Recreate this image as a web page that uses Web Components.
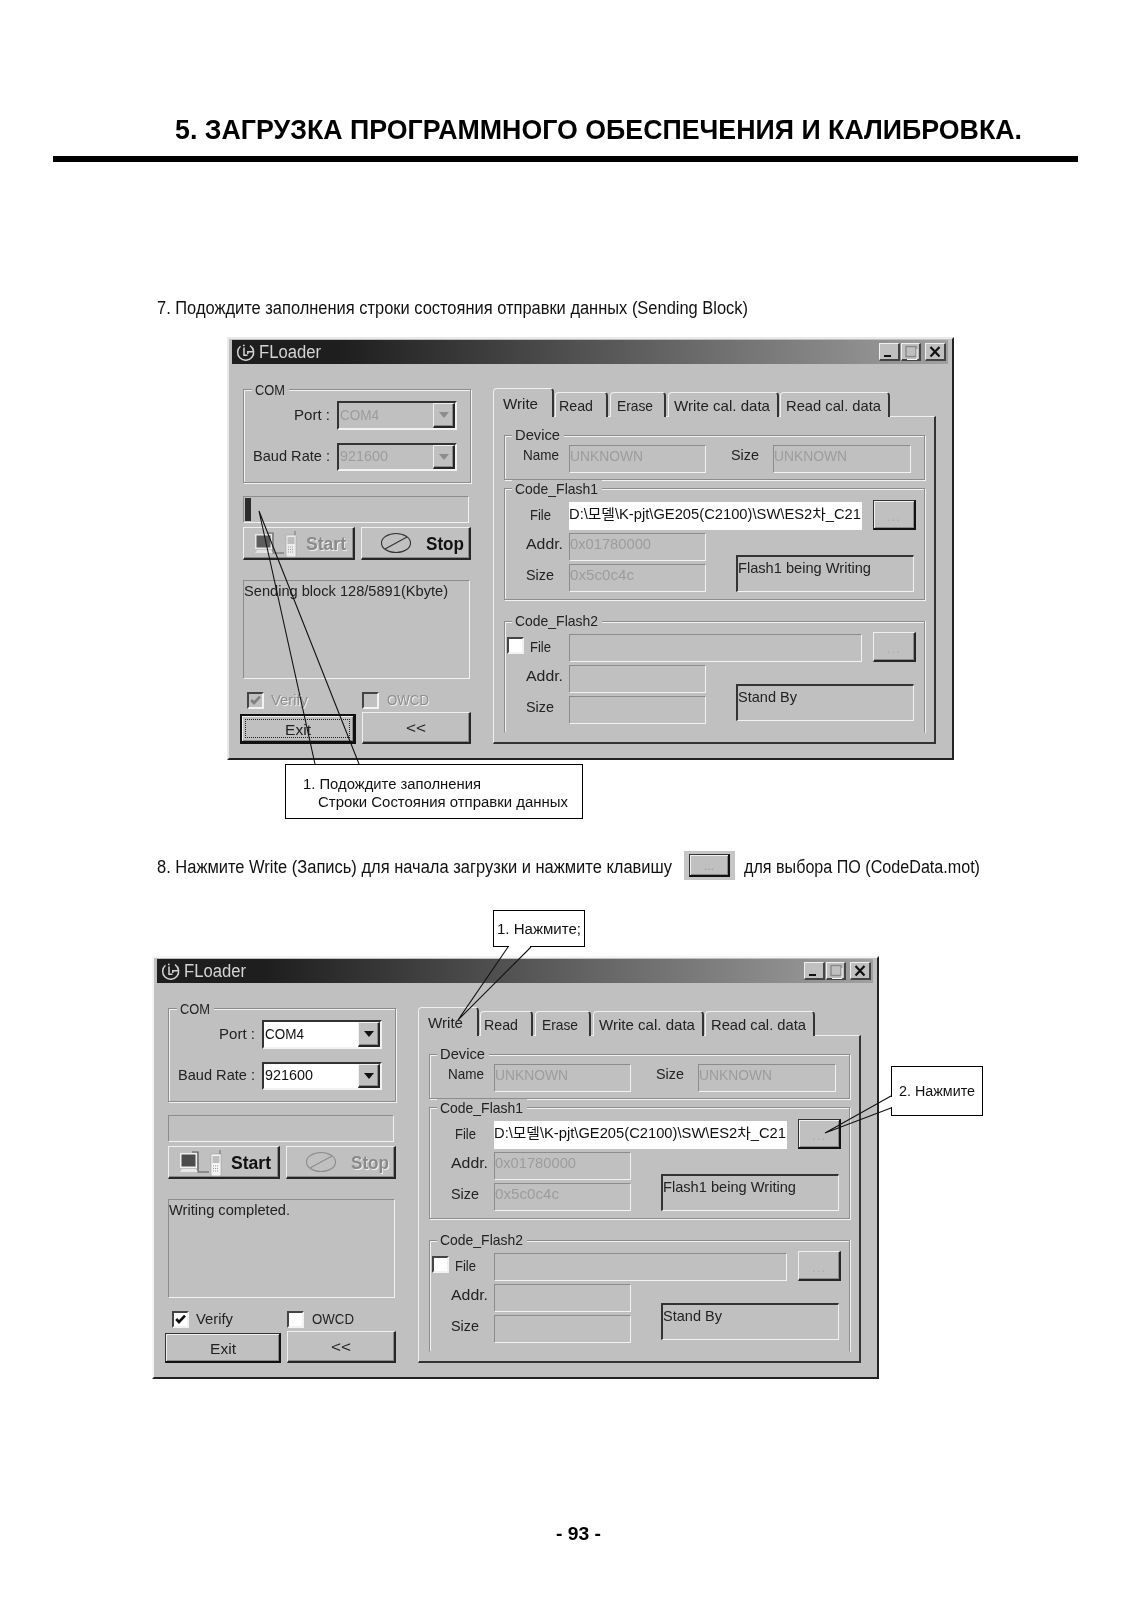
<!DOCTYPE html>
<html><head><meta charset="utf-8"><title>FLoader</title>
<style>html,body{margin:0;padding:0;background:#fff}</style></head>
<body>
<doc-page>
  <div class="title"><x-t w="847">5. ЗАГРУЗКА ПРОГРАММНОГО ОБЕСПЕЧЕНИЯ И КАЛИБРОВКА.</x-t></div>
  <div class="rule"></div>
  <div class="step s7"><x-t w="591">7. Подождите заполнения строки состояния отправки данных (Sending Block)</x-t></div>
  <fl-window class="w1" mode="sending"></fl-window>
  <x-callout class="c1">
    <x-t w="178">1. Подождите заполнения</x-t>
    <x-t w="250" style="margin-left:15px">Строки Состояния отправки данных</x-t>
  </x-callout>
  <div class="step s8">
    <x-t w="515" class="sh">8. Нажмите Write (Запись) для начала загрузки и нажмите клавишу</x-t>
    <span class="mini"><x-btn kind="def" class="minib"><span class="dots">...</span></x-btn></span>
    <x-t w="236" class="sh">для выбора ПО (CodeData.mot)</x-t>
  </div>
  <x-callout class="c2"><x-t w="84">1. Нажмите;</x-t></x-callout>
  <div class="row2">
    <fl-window class="w2" mode="done"></fl-window>
    <x-callout class="c3"><x-t w="76">2. Нажмите</x-t></x-callout>
  </div>
  <div class="pageno"><x-t w="45">- 93 -</x-t></div>
  <style>
    .title{padding:115px 0 11px 175px;font:bold 28px/30px "Liberation Sans",sans-serif;color:#000}
    .rule{margin-left:53px;width:1025px;height:6px;background:#000}
    .step{font:18px/24px "Liberation Sans",sans-serif;color:#111;padding-left:157px}
    .s7{margin-top:134px}
    .w1{margin:17px 0 0 227px}
    .c1{margin:4px 0 0 285px;width:298px;height:55px;padding:10px 0 0 17px}
    .s8{margin-top:31px;display:flex;align-items:center;height:30px}
    .sh{margin-top:4px}
    .mini{width:51px;height:29px;background:#c6c6c6;margin-left:12px;margin-right:9px;display:flex;align-items:center;justify-content:center}
    .minib{width:41px;height:23px;font:12px/16px "Liberation Sans",sans-serif;color:#999}
    .dots{padding-top:3px}
    .c2{margin:30px 0 0 493px;width:92px;height:37px;padding:9px 0 0 3px}
    .row2{display:flex;margin-top:9px;align-items:flex-start}
    .w2{margin-left:152px;--edge:#f5f5f5}
    .c3{margin:110px 0 0 12px;width:92px;height:50px;padding:15px 0 0 7px}
    .pageno{margin:143px 0 0 556px;font:bold 18px/24px "Liberation Sans",sans-serif;color:#000}
  </style>
</doc-page>
<script>
const SANS='"Liberation Sans","Noto Sans CJK KR",sans-serif';
class XT extends HTMLElement{
  connectedCallback(){
    if(this.shadowRoot)return;
    const w=+this.getAttribute('w');
    const r=this.attachShadow({mode:'open'});
    r.innerHTML=`<style>:host{display:inline-block;width:${w}px;white-space:nowrap}span{display:inline-block;transform-origin:0 50%}</style><span><slot></slot></span>`;
    const s=r.querySelector('span');
    const a=s.getBoundingClientRect().width;
    if(a>0)s.style.transform=`scaleX(${w/a})`;
  }
}

class DocPage extends HTMLElement{
  connectedCallback(){
    const r=this.attachShadow({mode:'open'});
    r.innerHTML=`<style>:host{display:block;position:relative;width:1132px;height:1600px;overflow:hidden;background:#fff}
    svg{position:absolute;left:0;top:0;pointer-events:none}</style>
    <slot></slot>
    <svg width="1132" height="1600" viewBox="0 0 1132 1600" fill="none">
      <path d="M509 946.5H530M891.5 1097V1107" stroke="#fff" stroke-width="1.4"/>
      <g stroke="#111" stroke-width="1.1">
        <path d="M315 764L259 511L359 764"/>
        <path d="M508 947L458 1020L531 947"/>
        <path d="M891 1096L825 1133L891 1108"/>
      </g>
    </svg>`;
  }
}
customElements.define('doc-page',DocPage);

class XCallout extends HTMLElement{
  connectedCallback(){
    const r=this.attachShadow({mode:'open'});
    r.innerHTML=`<style>:host{display:flex;flex-direction:column;flex:none;box-sizing:border-box;border:1px solid #000;background:#fff;font:14px/18px ${SANS};color:#111}</style><slot></slot>`;
  }
}
customElements.define('x-callout',XCallout);

class XGroup extends HTMLElement{
  connectedCallback(){
    const r=this.attachShadow({mode:'open'});
    const open=this.hasAttribute('open');
    const lw=this.getAttribute('lw');
    r.innerHTML=`<style>:host{display:block;position:relative;box-sizing:border-box;height:${this.getAttribute('h')}px;
      border:1px solid #8c8c8c;${open?'border-bottom-color:transparent;':''}
      box-shadow:${open?'1px 0 0 #f2f2f2':'1px 1px 0 #f2f2f2'},inset 1px 1px 0 #f2f2f2}
      .l{position:absolute;left:${this.getAttribute('ll')||7}px;top:${this.getAttribute('lt')||-10}px;padding:0 4px 0 3px;background:#c0c0c0;font-size:15px;line-height:18px;color:#222}</style>
      <div class="l"><x-t w="${lw}">${this.getAttribute('legend')}</x-t></div><slot></slot>`;
  }
}
customElements.define('x-group',XGroup);

class XField extends HTMLElement{
  connectedCallback(){
    const r=this.attachShadow({mode:'open'});
    const k=this.getAttribute('kind')||'dis';
    const st={dis:'border:1px solid;border-color:#8c8c8c #f2f2f2 #f2f2f2 #8c8c8c;color:#9c9c9c;font-size:14px;',
      white:'background:#fff;color:#111;font-size:14px;padding-top:2px;',
      log:'border:1px solid;border-color:#8c8c8c #f2f2f2 #f2f2f2 #8c8c8c;color:#222;font-size:15px;',
      status:'border:solid;border-width:2px 1px 1px 2px;border-color:#333 #f2f2f2 #f2f2f2 #333;color:#222;font-size:15px;line-height:18px;padding-top:2px;'}[k];
    r.innerHTML=`<style>:host{display:block;box-sizing:border-box;line-height:20px;${st}}</style><slot></slot>`;
  }
}
customElements.define('x-field',XField);

class XBtn extends HTMLElement{
  connectedCallback(){
    const r=this.attachShadow({mode:'open'});
    const k=this.getAttribute('kind')||'';
    const b={'':'border:solid;border-width:1px 2px 2px 1px;border-color:#f0f0f0 #262626 #262626 #f0f0f0;box-shadow:inset -1px -1px 0 #8a8a8a;',
      def:'border:solid;border-width:1px 2px 2px 1px;border-color:#333 #111 #111 #333;box-shadow:inset 1px 1px 0 #f0f0f0,inset -1px -1px 0 #8a8a8a;',
      focus:'border:solid 2px #111;border-width:2px 3px 3px 2px;box-shadow:inset 1px 1px 0 #f0f0f0,inset -1px -1px 0 #8a8a8a;outline:none;'}[k];
    const extra=k==='focus'?`<i></i>`:'';
    r.innerHTML=`<style>:host{display:flex;box-sizing:border-box;background:#c0c0c0;align-items:center;justify-content:center;position:relative;${b}}
      i{position:absolute;left:3px;top:3px;right:3px;bottom:3px;border:1px dotted #222}</style>${extra}<slot></slot>`;
  }
}
customElements.define('x-btn',XBtn);

class XCombo extends HTMLElement{
  connectedCallback(){
    const on=this.hasAttribute('on');
    const r=this.attachShadow({mode:'open'});
    r.innerHTML=`<style>:host{display:flex;box-sizing:border-box;align-items:center;justify-content:space-between;height:${this.getAttribute('h')}px;
      border:solid 2px;border-color:#333 #f2f2f2 #f2f2f2 #333;background:${on?'#fff':'#c0c0c0'};color:${on?'#111':'#9c9c9c'};font-size:15px;line-height:20px;padding-left:0}
      .t{padding:0 0 2px 1px}
      x-btn{width:22px;height:100%}
      svg{display:block}</style>
      <span class="t"><slot></slot></span>
      <x-btn><svg width="10" height="6" viewBox="0 0 10 6"><path d="M0 0H10L5 6Z" fill="${on?'#111':'#8c8c8c'}"/></svg></x-btn>`;
  }
}
customElements.define('x-combo',XCombo);

class XCheck extends HTMLElement{
  connectedCallback(){
    const m=this.getAttribute('state')||'';
    const dis=m.includes('dis');
    const r=this.attachShadow({mode:'open'});
    r.innerHTML=`<style>:host{display:block;flex:none;box-sizing:border-box;width:17px;height:17px;border:solid 2px;border-color:#444 #f2f2f2 #f2f2f2 #444;background:${dis?'#c0c0c0':'#fff'}}svg{display:block}</style>
      ${m.includes('on')?`<svg width="13" height="13" viewBox="0 0 13 13"><path d="M2.2 6L5 9L11 2.6" fill="none" stroke="${dis?'#808080':'#111'}" stroke-width="2.6"/></svg>`:''}`;
  }
}
customElements.define('x-check',XCheck);

class XTab extends HTMLElement{
  connectedCallback(){
    const a=this.hasAttribute('active');
    const r=this.attachShadow({mode:'open'});
    r.innerHTML=`<style>:host{display:flex;flex:none;align-items:center;box-sizing:border-box;position:relative;z-index:${a?2:0};
      width:${this.getAttribute('tw')}px;height:${a?29:25}px;padding:1px 0 0 ${this.getAttribute('pl')}px;background:#c0c0c0;
      border-top:1px solid #f0f0f0;border-left:1px solid #f0f0f0;border-right:2px solid #333;border-radius:4px 4px 0 0;font-size:15px;color:#222}</style><slot></slot>`;
  }
}
customElements.define('x-tab',XTab);

class WinBtn extends HTMLElement{
  connectedCallback(){
    const k=this.getAttribute('kind');
    const g={min:'<path d="M4 12H11" stroke="#111" stroke-width="2"/>',
      max:'<rect x="4" y="2.5" width="10" height="10" fill="none" stroke="#888" stroke-width="1.4"/><path d="M5 15.5H15V5" stroke="#f4f4f4" fill="none"/>',
      x:'<path d="M4.5 3L13.5 12.5M13.5 3L4.5 12.5" stroke="#111" stroke-width="2.2"/>'}[k];
    const r=this.attachShadow({mode:'open'});
    r.innerHTML=`<style>:host{display:block;flex:none;box-sizing:border-box;width:${k==='max'?20:21}px;height:18px;background:#c0c0c0;border:solid;border-width:1px 2px 2px 1px;border-color:#f0f0f0 #444 #444 #f0f0f0}svg{display:block}</style>
    <svg width="18" height="15" viewBox="0 0 18 15" overflow="visible">${g}</svg>`;
  }
}
customElements.define('win-btn',WinBtn);

class FlWindow extends HTMLElement{
  connectedCallback(){
    const done=this.getAttribute('mode')==='done';
    const r=this.attachShadow({mode:'open'});
    const lab=(w,t)=>`<x-t w="${w}">${t}</x-t>`;
    const on=done?'':'dis';
    const startCls=done?'b':'b dis', stopCls=done?'b dis':'b';
    const flash=(n,active)=>{
      return `<div class="fg ${n}">
        <div class="lb lf">${lab(21,'File')}</div>
        <x-field kind="${active?'white':'dis'}" class="ff">${active?`<x-t w="292">D:\\모델\\K-pjt\\GE205(C2100)\\SW\\ES2차_C21</x-t>`:''}</x-field>
        <x-btn class="bb" kind="${active?'def':''}"><span class="dots">...</span></x-btn>
        <div class="lb la">${lab(37,'Addr.')}</div>
        <x-field>${active?lab(81,'0x01780000'):''}</x-field>
        <x-field kind="status" class="st">${active?lab(133,'Flash1 being Writing'):lab(59,'Stand By')}</x-field>
        <div class="lb la">${lab(28,'Size')}</div>
        <x-field>${active?lab(64,'0x5c0c4c'):''}</x-field>
      </div>`;
    };
    r.innerHTML=`<style>
      :host{display:block;flex:none;box-sizing:border-box;width:727px;height:423px;background:#c0c0c0;
        border:solid;border-width:2px 2px 2px 2px;border-color:var(--edge,#e9e9e9) #222 #222 var(--edge,#e9e9e9);padding:1px 4px 0 3px;
        font:15px/20px ${SANS};color:#222;filter:blur(.5px)}
      .tb{display:flex;align-items:center;height:24px;background:linear-gradient(90deg,#1e1e1e 15%,#a0a0a0 100%);color:#d4d4d4;font-size:18px;padding:0 2px 0 3px;box-sizing:border-box}
      .tb svg{flex:none;display:block}
      .tb .tt{margin-left:4px;flex:1}
      .wb{display:flex;gap:1px}.wb win-btn:last-child{margin-left:3px}
      .body{display:grid;grid-template-columns:228px 443px;column-gap:22px;padding:25px 0 0 11px}
      .left{display:flex;flex-direction:column;min-width:0}
      .com{display:grid;grid-template-columns:86px 120px;column-gap:7px;row-gap:13px;grid-template-rows:29px 28px;padding-top:11px;align-items:center;box-sizing:border-box}
      .com .lb{text-align:right;display:flex;justify-content:flex-end;padding-bottom:2px}
      .progress{margin-top:13px;height:27px;width:226px;box-sizing:border-box;border:1px solid;border-color:#8c8c8c #f2f2f2 #f2f2f2 #8c8c8c;padding:1px}
      .progress div{width:6px;height:100%;background:#2c2c2c}
      .btns{display:grid;grid-template-columns:112px 110px;column-gap:6px;height:33px;margin-top:4px}
      .btns x-btn{justify-content:flex-start}
      .start{padding-left:10px}.stop{padding-left:19px}
      .b{font:bold 18px/24px ${SANS};color:#111;padding-top:2px}
      .dis{color:#8e8e8e;text-shadow:1px 1px 0 #f0f0f0}
      .b.dis{color:#8a8a8a}
      .log{margin-top:20px;height:99px;width:227px}
      .checks{display:grid;grid-template-columns:119px 109px;height:17px;margin-top:11px}
      .checks>div{display:flex;align-items:center;gap:7px}
      .checks>div:first-child{padding-left:4px}
      .bot{display:grid;grid-template-columns:116px 109px;column-gap:6px;margin:5px 0 0 -3px;height:31px}
      .bot .ex{height:30px;margin-top:2px;padding-top:2px}
      .right{min-width:0}
      .tabs{display:flex;align-items:flex-end;height:28px;margin-bottom:-1px;position:relative}
      .tabs x-tab:nth-child(2){margin-left:1px}.tabs x-tab:nth-child(3),.tabs x-tab:nth-child(4){margin-left:2px}.tabs x-tab:nth-child(5){margin-left:1px}
      .panel{box-sizing:border-box;height:328px;border:solid;border-width:1px 2px 2px 1px;border-color:#f0f0f0 #333 #333 #f0f0f0;padding:18px 0 0 10px}
      .panel x-group{width:421px}
      .dev{display:flex;padding-top:9px}
      .dev .lb{height:20px}
      .dev .n{width:64px;padding-left:18px;box-sizing:border-box}
      .dev .s{width:67px;padding-left:25px;box-sizing:border-box}
      .dev x-field{height:28px}
      .gap1{margin-top:8px}.gap2{margin-top:21px}
      .fg{display:grid;grid-template-columns:64px 137px 30px 126px 11px 41px 2px;grid-template-rows:28px 28px 28px;row-gap:3px;padding-top:13px}
      .fg.f2{padding-top:12px}
      .lb{line-height:20px;color:#222}
      .fg .lb{grid-column:1;padding:1px 0 0 21px}
      .fg .lf{padding:3px 0 0 25px;grid-row:1}
      .ff{grid-column:2/5;grid-row:1}
      .bb{grid-column:6/8;grid-row:1;margin-top:-2px;color:#aaa;font-size:13px}
      .dots{padding-top:4px;letter-spacing:1px}
      .st{grid-column:4/7;grid-row:2/4;align-self:end;height:37px}
      .f2 .st{margin-bottom:3px}
    </style>
    <div class="tb">
      <svg width="20" height="20" viewBox="0 0 20 20" fill="none" stroke="#d4d4d4" stroke-width="1.5">
        <path d="M5.5 4.2A8 8 0 1 0 15 3.6"/><circle cx="8.8" cy="3.4" r=".9" fill="#d4d4d4" stroke="none"/>
        <path d="M9 5.5V13.2H12.5M18 9.7H12.8V12"/></svg>
      <span class="tt"><x-t w="62">FLoader</x-t></span>
      <div class="wb"><win-btn kind="min"></win-btn><win-btn kind="max"></win-btn><win-btn kind="x"></win-btn></div>
    </div>
    <div class="body">
      <div class="left">
        <x-group legend="COM" lw="30" ll="8" lt="-9" h="94"><div class="com">
          <div class="lb">${lab(36,'Port :')}</div><x-combo h="29" ${done?'on':''}>${lab(39,'COM4')}</x-combo>
          <div class="lb">${lab(77,'Baud Rate :')}</div><x-combo h="28" ${done?'on':''}>${lab(48,'921600')}</x-combo>
        </div></x-group>
        <div class="progress">${done?'':'<div></div>'}</div>
        <div class="btns">
          <x-btn class="start">
            <svg width="44" height="30" viewBox="0 0 44 30" style="flex:none;margin-right:8px;${done?'':'opacity:.85'}">
              <path d="M13 5H19V25H30" fill="none" stroke="#555" stroke-width="1.2"/>
              <rect x="1" y="6" width="17" height="15" fill="#f0f0f0"/><rect x="2.5" y="7.5" width="14" height="12" fill="#4c4c4c"/>
              <path d="M3 22H17L19 25H1Z" fill="#e8e8e8"/>
              <rect x="32" y="7" width="10" height="22" rx="1" fill="#f4f4f4" stroke="#9a9a9a" stroke-width=".6"/>
              <path d="M41 3V7" stroke="#777" stroke-width="1.2"/>
              <rect x="33.5" y="9" width="7" height="7" fill="#bdbdbd"/>
              <path d="M34 19H40M34 21.5H40M34 24H40" stroke="#9a9a9a" stroke-dasharray="1 1"/>
            </svg>
            <span class="${startCls}">${lab(40,'Start')}</span>
          </x-btn>
          <x-btn class="stop">
            <svg width="30" height="22" viewBox="0 0 30 22" style="flex:none;margin-right:15px" fill="none" stroke="${done?'#8c8c8c':'#333'}" stroke-width="1.1">
              <ellipse cx="15" cy="11" rx="14.5" ry="9.5"/><path d="M4 17L26 5"/></svg>
            <span class="${stopCls}">${lab(38,'Stop')}</span>
          </x-btn>
        </div>
        <x-field kind="log" class="log">${done?lab(121,'Writing completed.'):lab(204,'Sending block 128/5891(Kbyte)')}</x-field>
        <div class="checks">
          <div><x-check state="on ${on}"></x-check><span class="${on}">${lab(37,'Verify')}</span></div>
          <div><x-check state="${on}"></x-check><span class="${on}" style="margin-left:1px">${lab(42,'OWCD')}</span></div>
        </div>
        <div class="bot">
          <x-btn class="ex" kind="${done?'def':'focus'}">${lab(26,'Exit')}</x-btn>
          <x-btn>${lab(20,'&lt;&lt;')}</x-btn>
        </div>
      </div>
      <div class="right">
        <div class="tabs">
          <x-tab active tw="61" pl="9">${lab(35,'Write')}</x-tab>
          <x-tab tw="53" pl="3">${lab(34,'Read')}</x-tab>
          <x-tab tw="56" pl="6">${lab(36,'Erase')}</x-tab>
          <x-tab tw="111" pl="5">${lab(96,'Write cal. data')}</x-tab>
          <x-tab tw="110" pl="5">${lab(95,'Read cal. data')}</x-tab>
        </div>
        <div class="panel">
          <x-group legend="Device" lw="45" h="45"><div class="dev">
            <div class="lb n">${lab(36,'Name')}</div><x-field style="width:137px">${lab(73,'UNKNOWN')}</x-field>
            <div class="lb s">${lab(28,'Size')}</div><x-field style="width:138px">${lab(73,'UNKNOWN')}</x-field>
          </div></x-group>
          <x-group class="gap1" legend="Code_Flash1" lw="83" lt="-9" h="112">${flash('f1',true)}</x-group>
          <x-group class="gap2" legend="Code_Flash2" lw="83" h="112" open>
            <x-check style="position:absolute;left:2px;top:15px"></x-check>${flash('f2',false)}</x-group>
        </div>
      </div>
    </div>`;
  }
}
customElements.define('fl-window',FlWindow);
customElements.define('x-t',XT);
</script>
</body></html>
